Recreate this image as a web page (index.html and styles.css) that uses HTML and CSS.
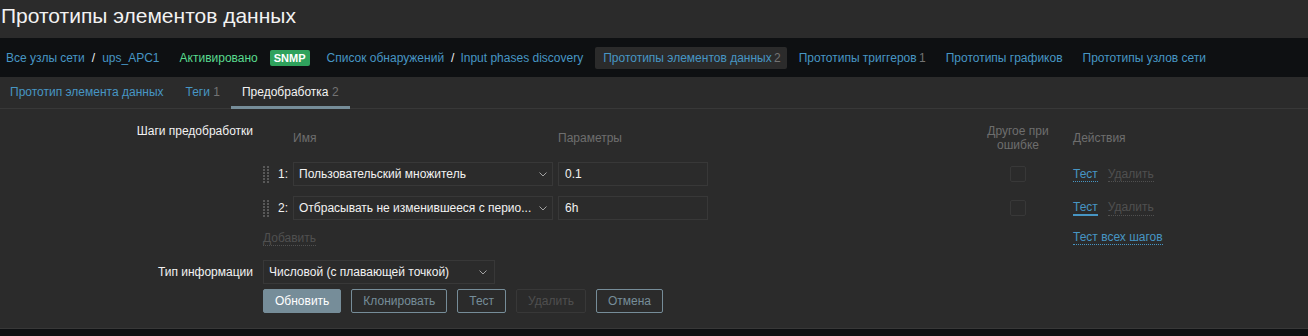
FILE: index.html
```html
<!DOCTYPE html>
<html lang="ru">

<head>
    <meta charset="UTF-8">
    <title>Прототипы элементов данных</title>
    <link rel="stylesheet" href="styles.css">
</head>

<body>
    <header class="page-header">
        <h1>Прототипы элементов данных</h1>
    </header>

    <nav class="breadcrumbs">
        <div class="crumb first">
            <a href="#">Все узлы сети</a><span class="slash">/</span><a href="#">ups_APC1</a>
        </div>
        <div class="crumb"><span class="green">Активировано</span></div>
        <div class="crumb bare"><span class="badge">SNMP</span></div>
        <div class="crumb">
            <a href="#">Список обнаружений</a><span class="slash">/</span><a href="#">Input phases discovery</a>
        </div>
        <div class="crumb selected"><a href="#">Прототипы элементов данных</a> <sup>2</sup></div>
        <div class="crumb"><a href="#">Прототипы триггеров</a> <sup>1</sup></div>
        <div class="crumb"><a href="#">Прототипы графиков</a></div>
        <div class="crumb"><a href="#">Прототипы узлов сети</a></div>
    </nav>

    <div class="tabs">
        <a class="tab" href="#">Прототип элемента данных</a>
        <a class="tab" href="#">Теги <sup>1</sup></a>
        <a class="tab active" href="#">Предобработка <sup>2</sup></a>
    </div>

    <form class="form">
        <label class="form-label top">Шаги предобработки</label>
        <div class="steps">
            <div class="step-row head">
                <div></div>
                <div>Имя</div>
                <div>Параметры</div>
                <div></div>
                <div class="center">Другое при<br>ошибке</div>
                <div class="actions">Действия</div>
            </div>

            <div class="step-row">
                <div class="num-cell"><span class="drag"></span><span class="num">1:</span></div>
                <div class="select name">
                    <span class="value">Пользовательский множитель</span>
                    <svg width="8" height="5" viewBox="0 0 8 5"><polyline points="0.5,0.5 4,4 7.5,0.5" fill="none" stroke="#a3a3a3" stroke-width="1"/></svg>
                </div>
                <div><input class="input" type="text" value="0.1"></div>
                <div></div>
                <div class="center"><span class="checkbox"></span></div>
                <div class="actions"><a class="link" href="#">Тест</a><a class="link muted" href="#">Удалить</a></div>
            </div>

            <div class="step-row">
                <div class="num-cell"><span class="drag"></span><span class="num">2:</span></div>
                <div class="select name">
                    <span class="value">Отбрасывать не изменившееся с перио...</span>
                    <svg width="8" height="5" viewBox="0 0 8 5"><polyline points="0.5,0.5 4,4 7.5,0.5" fill="none" stroke="#a3a3a3" stroke-width="1"/></svg>
                </div>
                <div><input class="input" type="text" value="6h"></div>
                <div></div>
                <div class="center"><span class="checkbox"></span></div>
                <div class="actions"><a class="link focused" href="#">Тест</a><a class="link muted" href="#">Удалить</a></div>
            </div>

            <div class="step-row foot">
                <div class="add-cell"><a class="link muted" href="#">Добавить</a></div>
                <div></div>
                <div></div>
                <div class="actions"><a class="link" href="#">Тест всех шагов</a></div>
            </div>
        </div>

        <label class="form-label middle">Тип информации</label>
        <div class="select type">
            <span class="value">Числовой (с плавающей точкой)</span>
            <svg width="8" height="5" viewBox="0 0 8 5"><polyline points="0.5,0.5 4,4 7.5,0.5" fill="none" stroke="#a3a3a3" stroke-width="1"/></svg>
        </div>

        <div></div>
        <div class="buttons">
            <button type="button" class="btn primary">Обновить</button>
            <button type="button" class="btn">Клонировать</button>
            <button type="button" class="btn">Тест</button>
            <button type="button" class="btn" disabled>Удалить</button>
            <button type="button" class="btn">Отмена</button>
        </div>
    </form>

    <footer class="page-footer"></footer>
</body>

</html>
```

FILE: styles.css
```css
body {
    margin: 0;
    background: #2b2b2b;
    color: #f2f2f2;
    font-family: 'Liberation Sans', Arial, sans-serif;
    font-size: 12px;
    line-height: 14px;
}

a {
    color: #4796c4;
    text-decoration: none;
}

sup {
    vertical-align: baseline;
    font-size: 12px;
    color: #737373;
}

/* Title */
.page-header {
    height: 38px;
}

.page-header h1 {
    margin: 0;
    padding-left: 1px;
    font-size: 21px;
    font-weight: normal;
    line-height: 31px;
    color: #f2f2f2;
}

/* Breadcrumbs */
.breadcrumbs {
    display: flex;
    align-items: center;
    gap: 4px;
    height: 39px;
    background: #0e1012;
}

.crumb {
    height: 22px;
    line-height: 22px;
    padding: 0 8px;
    border-radius: 2px;
    white-space: nowrap;
}

.crumb.first {
    padding-left: 6px;
}

.crumb.bare {
    padding: 0 5px 0 0;
}

.crumb.selected {
    padding-right: 6px;
    background: #2b2b2b;
}

.crumb sup {
    margin-left: -1px;
}

.slash {
    margin: 0 6px 0 7px;
    color: #f2f2f2;
}

.crumb.first .slash {
    margin: 0 7px;
}

.green {
    color: #59db8f;
}

.badge {
    display: inline-block;
    vertical-align: middle;
    padding: 0 4px;
    height: 16px;
    line-height: 16px;
    font-size: 11px;
    font-weight: bold;
    color: #fff;
    background: #2fa25c;
    border-radius: 2px;
}

/* Tabs */
.tabs {
    display: flex;
    height: 31px;
    border-bottom: 1px solid #383838;
}

.tab {
    display: flex;
    align-items: center;
    height: 29px;
    padding: 0 11px;
    margin-bottom: -1px;
    border-bottom: 3px solid transparent;
    white-space: pre;
}

.tab:first-child {
    padding-left: 10px;
}

.tab.active {
    color: #f2f2f2;
    border-bottom-color: #768d99;
}

/* Form */
.form {
    display: grid;
    grid-template-columns: 253px 1fr;
    column-gap: 10px;
    row-gap: 5px;
    padding: 10px 0 15px;
    border-bottom: 1px solid #383838;
}

.form-label {
    text-align: right;
    color: #f2f2f2;
}

.form-label.top {
    padding-top: 5px;
}

.form-label.middle {
    align-self: center;
}

.steps {
    margin-bottom: 5px;
}

.step-row {
    display: grid;
    grid-template-columns: 30px 265px 150px 275px 70px 1fr;
    align-items: center;
    padding: 5px 0;
}

.step-row.head {
    min-height: 28px;
    color: #6e6e6e;
}

.step-row.foot {
    grid-template-columns: 295px 150px 345px 1fr;
}

.center {
    text-align: center;
    display: flex;
    justify-content: center;
}

.actions {
    display: flex;
    gap: 10px;
    padding-left: 20px;
}

.num-cell {
    display: flex;
    align-items: center;
}

.drag {
    width: 6px;
    height: 17px;
    background-image:
        linear-gradient(to right, transparent 2px, #2b2b2b 2px, #2b2b2b 4px, transparent 4px),
        repeating-linear-gradient(to bottom, #595959 0 2px, transparent 2px 3px);
}

.num {
    margin-left: auto;
    padding-right: 5px;
}

.select {
    display: flex;
    align-items: center;
    justify-content: space-between;
    box-sizing: border-box;
    height: 24px;
    padding: 0 5px;
    border: 1px solid #383838;
    background: #2b2b2b;
    white-space: nowrap;
}

.select.name {
    width: 260px;
}

.select.type {
    width: 232px;
    padding-right: 7px;
}

.input {
    box-sizing: border-box;
    width: 150px;
    height: 24px;
    padding: 0 6px;
    border: 1px solid #383838;
    background: #2b2b2b;
    color: #f2f2f2;
    font-family: inherit;
    font-size: 12px;
    outline: none;
}

.checkbox {
    box-sizing: border-box;
    width: 16px;
    height: 16px;
    border: 1px solid #383838;
    border-radius: 2px;
}

.link {
    border-bottom: 1px dotted #4796c4;
}

.link.muted {
    color: #505050;
    border-bottom-color: #505050;
}

.link.focused {
    border-bottom: 2px solid #4796c4;
}

.add-cell {
    padding-left: 0;
}

/* Buttons */
.buttons {
    display: flex;
    gap: 10px;
}

.btn {
    height: 24px;
    padding: 0 11px;
    border: 1px solid #768d99;
    border-radius: 2px;
    background: transparent;
    color: #768d99;
    font-family: inherit;
    font-size: 12px;
}

.btn.primary {
    background: #768d99;
    color: #fff;
}

.btn:disabled {
    border-color: #383838;
    color: #4f4f4f;
}

.page-footer {
    height: 20px;
    background: #0e1012;
}
```
